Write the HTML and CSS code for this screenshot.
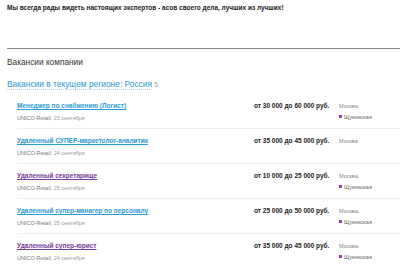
FILE: index.html
```html
<!DOCTYPE html>
<html lang="ru">
<head>
  <meta charset="UTF-8">
  <title>Вакансии компании</title>
  <link rel="stylesheet" href="styles.css">
</head>
<body>
  <p class="intro">Мы всегда рады видеть настоящих экспертов - асов своего дела, лучших из лучших!</p>

  <div class="vacancies">
    <h2 class="section-title">Вакансии компании</h2>
    <h3 class="region"><a href="#">Вакансии в текущем регионе: Россия</a> <span class="count">5</span></h3>

    <div class="vacancy">
      <div class="info">
        <a href="#" class="title">Менеджер по снабжению (Логист)</a>
        <div class="meta">UNICO-Retail, <span class="date">23 сентября</span></div>
      </div>
      <div class="salary">от 30 000 до 60 000 руб.</div>
      <div class="place">
        <div>Москва,</div>
        <div class="metro"><span class="dot"></span>Щукинская</div>
      </div>
    </div>

    <div class="vacancy">
      <div class="info">
        <a href="#" class="title">Удаленный СУПЕР-маркетолог-аналитик</a>
        <div class="meta">UNICO-Retail, <span class="date">24 сентября</span></div>
      </div>
      <div class="salary">от 35 000 до 45 000 руб.</div>
      <div class="place">
        <div>Москва</div>
      </div>
    </div>

    <div class="vacancy">
      <div class="info">
        <a href="#" class="title visited">Удаленный секретарище</a>
        <div class="meta">UNICO-Retail, <span class="date">25 сентября</span></div>
      </div>
      <div class="salary">от 10 000 до 25 000 руб.</div>
      <div class="place">
        <div>Москва,</div>
        <div class="metro"><span class="dot"></span>Щукинская</div>
      </div>
    </div>

    <div class="vacancy">
      <div class="info">
        <a href="#" class="title">Удаленный супер-манагер по персоналу</a>
        <div class="meta">UNICO-Retail, <span class="date">25 сентября</span></div>
      </div>
      <div class="salary">от 25 000 до 50 000 руб.</div>
      <div class="place">
        <div>Москва,</div>
        <div class="metro"><span class="dot"></span>Щукинская</div>
      </div>
    </div>

    <div class="vacancy">
      <div class="info">
        <a href="#" class="title visited">Удаленный супер-юрист</a>
        <div class="meta">UNICO-Retail, <span class="date">24 сентября</span></div>
      </div>
      <div class="salary">от 35 000 до 45 000 руб.</div>
      <div class="place">
        <div>Москва,</div>
        <div class="metro"><span class="dot"></span>Щукинская</div>
      </div>
    </div>
  </div>
</body>
</html>
```

FILE: styles.css
```css
body {
  font-family: "Liberation Sans", Arial, sans-serif;
  margin: 0;
  padding: 0 0 0 7px;
  color: #222;
  background-color: #fff;
}

.intro {
  margin: 0;
  padding-top: 3px;
  font-size: 6.5px;
  font-weight: bold;
  line-height: 10px;
}

.vacancies {
  margin-top: 35px;
  border-top: 1px solid #888;
}

.section-title {
  margin: 0;
  padding-top: 7px;
  font-size: 8.3px;
  font-weight: normal;
  line-height: 12px;
  color: #333;
}

.region {
  margin: 0 0 2px;
  padding-top: 9px;
  font-size: 8.4px;
  font-weight: normal;
  line-height: 14px;
}

.region a {
  color: #2c9ad3;
  text-decoration: none;
  border-bottom: 1px dotted #a9d4ec;
}

.count {
  font-size: 6.5px;
  color: #999;
}

.vacancy {
  display: grid;
  grid-template-columns: 1fr 85px 61px;
  margin-left: 10px;
  padding: 7px 0;
  height: 20px;
  border-bottom: 1px solid #eee;
}

.info {
  font-size: 6.5px;
  line-height: 10px;
}

.title {
  font-weight: bold;
  color: #2c9ad3;
}

.title.visited {
  color: #7b3b9a;
}

.meta {
  margin-top: 2px;
  font-size: 5.5px;
  color: #777;
}

.date {
  color: #999;
}

.salary {
  font-size: 6.5px;
  font-weight: bold;
  line-height: 10px;
  white-space: nowrap;
}

.place {
  font-size: 5.5px;
  color: #888;
  line-height: 10px;
}

.metro {
  margin-top: 1px;
  color: #666;
}

.dot {
  display: inline-block;
  width: 3px;
  height: 3px;
  margin-right: 2px;
  vertical-align: 1px;
  background-color: #a03aa8;
}
```
